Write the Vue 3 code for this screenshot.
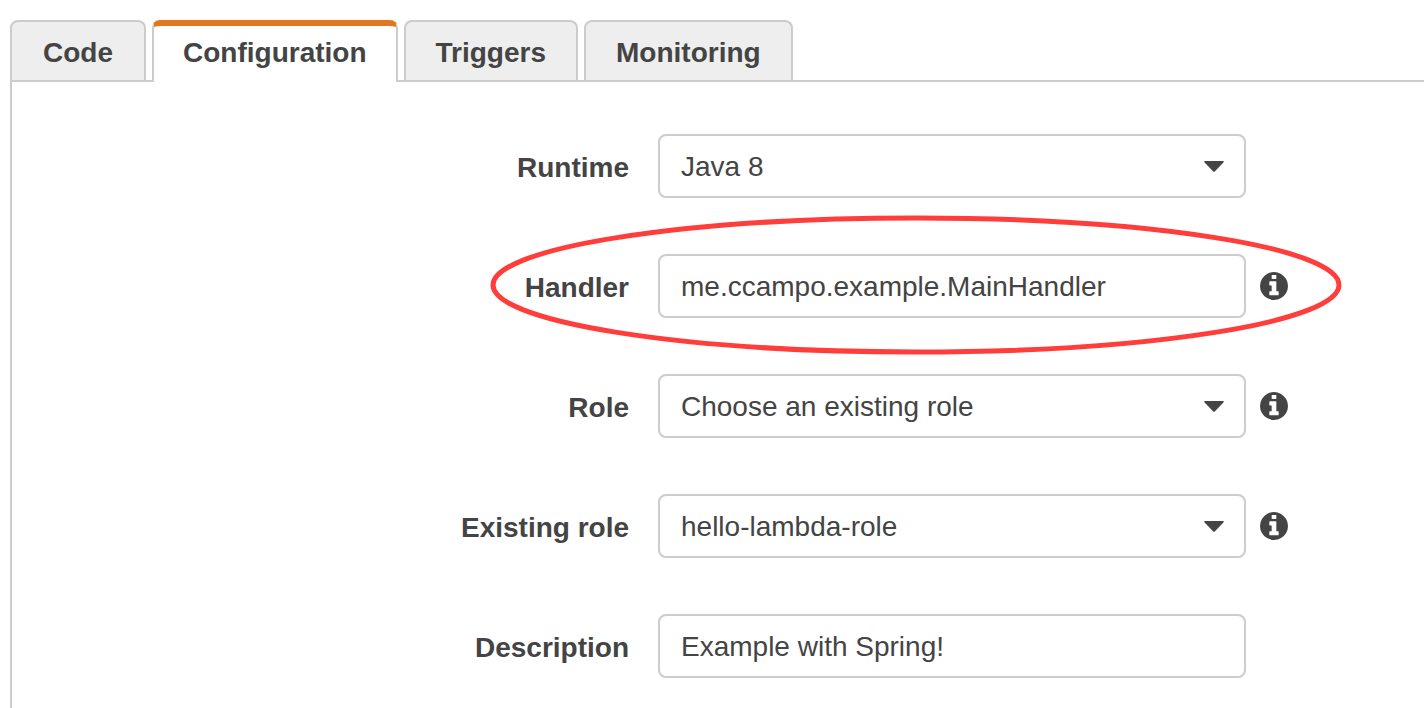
<script setup>
import { ref, reactive } from 'vue'

const tabs = ['Code', 'Configuration', 'Triggers', 'Monitoring']
const active = ref('Configuration')

const fields = reactive([
  { id: 'runtime', label: 'Runtime', type: 'select', value: 'Java 8', options: ['Java 8'] },
  { id: 'handler', label: 'Handler', type: 'text', value: 'me.ccampo.example.MainHandler', info: true, circled: true },
  { id: 'role', label: 'Role', type: 'select', value: 'Choose an existing role', options: ['Choose an existing role'], info: true },
  { id: 'existing-role', label: 'Existing role', type: 'select', value: 'hello-lambda-role', options: ['hello-lambda-role'], info: true },
  { id: 'description', label: 'Description', type: 'text', value: 'Example with Spring!' }
])
</script>

<template>
  <main class="page">
    <div class="tabs" role="tablist">
      <button
        v-for="tab in tabs"
        :key="tab"
        type="button"
        role="tab"
        class="tab"
        :class="{ active: tab === active }"
        :aria-selected="tab === active"
        @click="active = tab"
      >{{ tab }}</button>
    </div>

    <form class="panel" @submit.prevent>
      <div v-for="field in fields" :key="field.id" class="row">
        <label class="label" :for="field.id">{{ field.label }}</label>
        <div class="field">
          <template v-if="field.type === 'select'">
            <select :id="field.id" v-model="field.value" class="control">
              <option v-for="option in field.options" :key="option">{{ option }}</option>
            </select>
            <svg class="caret" viewBox="0 0 20 11" aria-hidden="true">
              <path d="M1 0H19Q20.4 0.3 19.4 1.5L11 10.2Q10 11.2 9 10.2L0.6 1.5Q-0.4 0.3 1 0Z" />
            </svg>
          </template>
          <input v-else :id="field.id" v-model="field.value" type="text" class="control" />
          <svg v-if="field.circled" class="circle" aria-hidden="true">
            <ellipse cx="50%" cy="50%" rx="50%" ry="50%" />
          </svg>
        </div>
        <div class="aside">
          <button v-if="field.info" type="button" class="info" :aria-label="`About ${field.label}`">
            <svg viewBox="128 128 1536 1536" aria-hidden="true">
              <path d="M1152 1376v-160q0-14-9-23t-23-9h-96v-512q0-14-9-23t-23-9h-320q-14 0-23 9t-9 23v160q0 14 9 23t23 9h96v320h-96q-14 0-23 9t-9 23v160q0 14 9 23t23 9h448q14 0 23-9t9-23zM1024 480v-160q0-14-9-23t-23-9h-192q-14 0-23 9t-9 23v160q0 14 9 23t23 9h192q14 0 23-9t9-23zM1664 896q0 209-103 385.5t-279.5 279.5-385.5 103-385.5-103-279.5-279.5-103-385.5 103-385.5 279.5-279.5 385.5-103 385.5 103 279.5 279.5 103 385.5z" />
            </svg>
          </button>
        </div>
      </div>
    </form>
  </main>
</template>

<style>
body {
  margin: 0;
  background: #fff;
}
</style>

<style scoped>
.page {
  box-sizing: border-box;
  min-height: 100vh;
  display: flex;
  flex-direction: column;
  padding: 20px 0 0 10px;
  color: #444;
  font-family: "Liberation Sans", Arial, sans-serif;
  font-size: 28px;
  line-height: 32px;
}

.tabs {
  display: flex;
  gap: 6px;
}

.tab {
  box-sizing: border-box;
  min-width: 136px;
  height: 60px;
  padding: 4px 30px 0;
  border: 2px solid #ccc;
  border-bottom: 0;
  border-radius: 8px 8px 0 0;
  background: #eee;
  color: inherit;
  font: inherit;
  font-weight: bold;
  cursor: pointer;
}

.tab.active {
  position: relative;
  height: 62px;
  margin-bottom: -2px;
  padding: 0 29px 2px;
  border-top: 6px solid #e07820;
  background: #fff;
}

.panel {
  flex: 1;
  display: flex;
  flex-direction: column;
  gap: 56px;
  padding: 52px 0 30px;
  border: 2px solid #ccc;
  border-width: 2px 0 0 2px;
}

.row {
  display: grid;
  grid-template-columns: 646fr 588fr 178fr;
  align-items: center;
}

.label {
  padding: 4px 29px 0 0;
  text-align: right;
  font-weight: bold;
}

.field {
  position: relative;
}

.control {
  display: block;
  box-sizing: border-box;
  width: 100%;
  height: 64px;
  margin: 0;
  padding: 2px 21px 0;
  border: 2px solid #ccc;
  border-radius: 8px;
  background: #fff;
  color: inherit;
  font: inherit;
  appearance: none;
}

.caret {
  position: absolute;
  top: 27px;
  right: 22px;
  width: 20px;
  height: 11px;
  fill: #444;
  pointer-events: none;
}

.circle {
  position: absolute;
  top: -36px;
  left: -165px;
  width: calc(100% + 258px);
  height: calc(100% + 70px);
  overflow: visible;
  fill: none;
  stroke: #ff3e3b;
  stroke-width: 5px;
  pointer-events: none;
}

.aside {
  display: flex;
  padding-left: 14px;
}

.info {
  display: block;
  padding: 0;
  border: 0;
  background: none;
  cursor: pointer;
}

.info svg {
  display: block;
  width: 28px;
  height: 28px;
  fill: #444;
}
</style>
